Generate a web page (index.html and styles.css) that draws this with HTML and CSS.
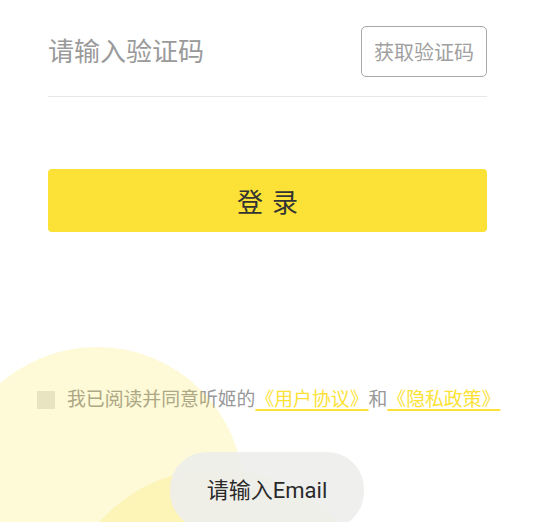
FILE: index.html
```html
<!DOCTYPE html>
<html lang="zh-CN">
<head>
<meta charset="utf-8">
<title>登录</title>
<link rel="stylesheet" href="styles.css">
</head>
<body>
<div class="page">
  <div class="form">
    <div class="code-row">
      <div class="code-input">请输入验证码</div>
      <button class="code-btn">获取验证码</button>
    </div>
    <button class="login-btn">登录</button>
  </div>
  <div class="agree">
    <span class="check"></span>
    <span class="agree-text">我已阅读并同意听姬的<a class="link">《用户协议》</a>和<a class="link">《隐私政策》</a></span>
  </div>
  <div class="circle circle-a"></div>
  <div class="circle circle-b"></div>
  <div class="toast">请输入Email</div>
</div>
</body>
</html>
```

FILE: styles.css
```css
html, body {
  margin: 0;
  padding: 0;
  background: #fff;
}
body {
  font-family: Roboto, "Noto Sans CJK SC", sans-serif;
}
.page {
  position: relative;
  width: 534px;
  height: 522px;
  overflow: hidden;
}
.form {
  padding: 0 47px 0 48px;
}
.code-row {
  display: flex;
  align-items: center;
  justify-content: space-between;
  padding: 26px 0 19px;
  border-bottom: 1px solid #e8e8e8;
}
.code-input {
  font-size: 26px;
  color: #9a9a9a;
  line-height: 36px;
}
.code-btn {
  box-sizing: border-box;
  width: 126px;
  height: 51px;
  border: 1.5px solid #a8a8a8;
  border-radius: 5px;
  background: #fff;
  color: #a0a0a0;
  font-family: Roboto, "Noto Sans CJK SC", sans-serif;
  font-size: 20px;
  padding: 0;
}
.login-btn {
  display: block;
  width: 100%;
  height: 63px;
  margin-top: 72px;
  border: none;
  border-radius: 4px;
  background: #fce236;
  color: #333;
  font-family: Roboto, "Noto Sans CJK SC", sans-serif;
  font-size: 26px;
  letter-spacing: 9px;
  padding: 0 0 0 9px;
}
.agree {
  display: flex;
  align-items: center;
  gap: 12px;
  margin-top: 156px;
  padding-left: 37px;
}
.check {
  width: 18px;
  height: 18px;
  background: #e4e4e4;
  flex: none;
}
.agree-text {
  font-size: 18.85px;
  line-height: 24px;
  color: #999;
  white-space: nowrap;
}
.link {
  color: #fce236;
  text-decoration: underline;
  text-decoration-color: #fce236;
  text-decoration-thickness: 1.5px;
  text-underline-offset: 3px;
}
.circle {
  position: absolute;
  border-radius: 50%;
  background: rgba(252, 225, 53, 0.2);
  pointer-events: none;
}
.circle-a {
  left: -50px;
  top: 347px;
  width: 294px;
  height: 294px;
}
.circle-b {
  left: 59px;
  top: 469px;
  width: 318px;
  height: 318px;
}
.toast {
  box-sizing: border-box;
  position: absolute;
  left: 170px;
  top: 452px;
  width: 194px;
  height: 77px;
  padding-bottom: 5px;
  border-radius: 37px;
  background: rgba(238, 238, 236, 0.93);
  color: #2a2a2a;
  font-size: 22px;
  display: flex;
  align-items: center;
  justify-content: center;
}
```
